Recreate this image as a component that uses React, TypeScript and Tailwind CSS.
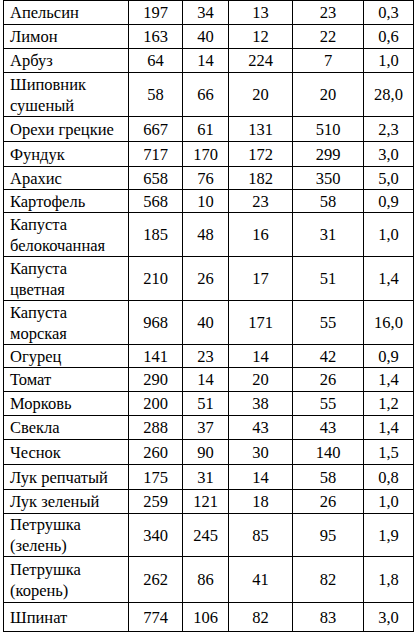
const rows: [string, string, string, string, string, string, number][] = [
  ['Апельсин', '197', '34', '13', '23', '0,3', 24],
  ['Лимон', '163', '40', '12', '22', '0,6', 24],
  ['Арбуз', '64', '14', '224', '7', '1,0', 24],
  ['Шиповник\nсушеный', '58', '66', '20', '20', '28,0', 44],
  ['Орехи грецкие', '667', '61', '131', '510', '2,3', 25],
  ['Фундук', '717', '170', '172', '299', '3,0', 25],
  ['Арахис', '658', '76', '182', '350', '5,0', 23],
  ['Картофель', '568', '10', '23', '58', '0,9', 23],
  ['Капуста\nбелокочанная', '185', '48', '16', '31', '1,0', 44],
  ['Капуста\nцветная', '210', '26', '17', '51', '1,4', 44],
  ['Капуста\nморская', '968', '40', '171', '55', '16,0', 44],
  ['Огурец', '141', '23', '14', '42', '0,9', 23],
  ['Томат', '290', '14', '20', '26', '1,4', 24],
  ['Морковь', '200', '51', '38', '55', '1,2', 24],
  ['Свекла', '288', '37', '43', '43', '1,4', 24],
  ['Чеснок', '260', '90', '30', '140', '1,5', 25],
  ['Лук репчатый', '175', '31', '14', '58', '0,8', 25],
  ['Лук зеленый', '259', '121', '18', '26', '1,0', 24],
  ['Петрушка\n(зелень)', '340', '245', '85', '95', '1,9', 43],
  ['Петрушка\n(корень)', '262', '86', '41', '82', '1,8', 46],
  ['Шпинат', '774', '106', '82', '83', '3,0', 29],
]

const widths = ['w-[125px]', 'w-[54px]', 'w-[46px]', 'w-[64px]', 'w-[71px]', 'w-[50px]']

export default function App() {
  return (
    <div className="min-h-[636px] bg-white pl-[3px] text-black">
      <table className="table-fixed border-collapse font-['Liberation_Serif','Times_New_Roman',serif] text-[16.5px] leading-[21px]">
        <tbody>
          {rows.map(([name, ...rest]) => {
            const h = rest[5] as number
            const nums = rest.slice(0, 5) as string[]
            return (
              <tr key={name} style={{ height: h }}>
                <td className={`${widths[0]} whitespace-pre-line border border-black p-0 pl-[6px] text-left align-middle`}>
                  {name}
                </td>
                {nums.map((v, i) => (
                  <td key={i} className={`${widths[i + 1]} border border-black p-0 text-center align-middle`}>
                    {v}
                  </td>
                ))}
              </tr>
            )
          })}
        </tbody>
      </table>
    </div>
  )
}
